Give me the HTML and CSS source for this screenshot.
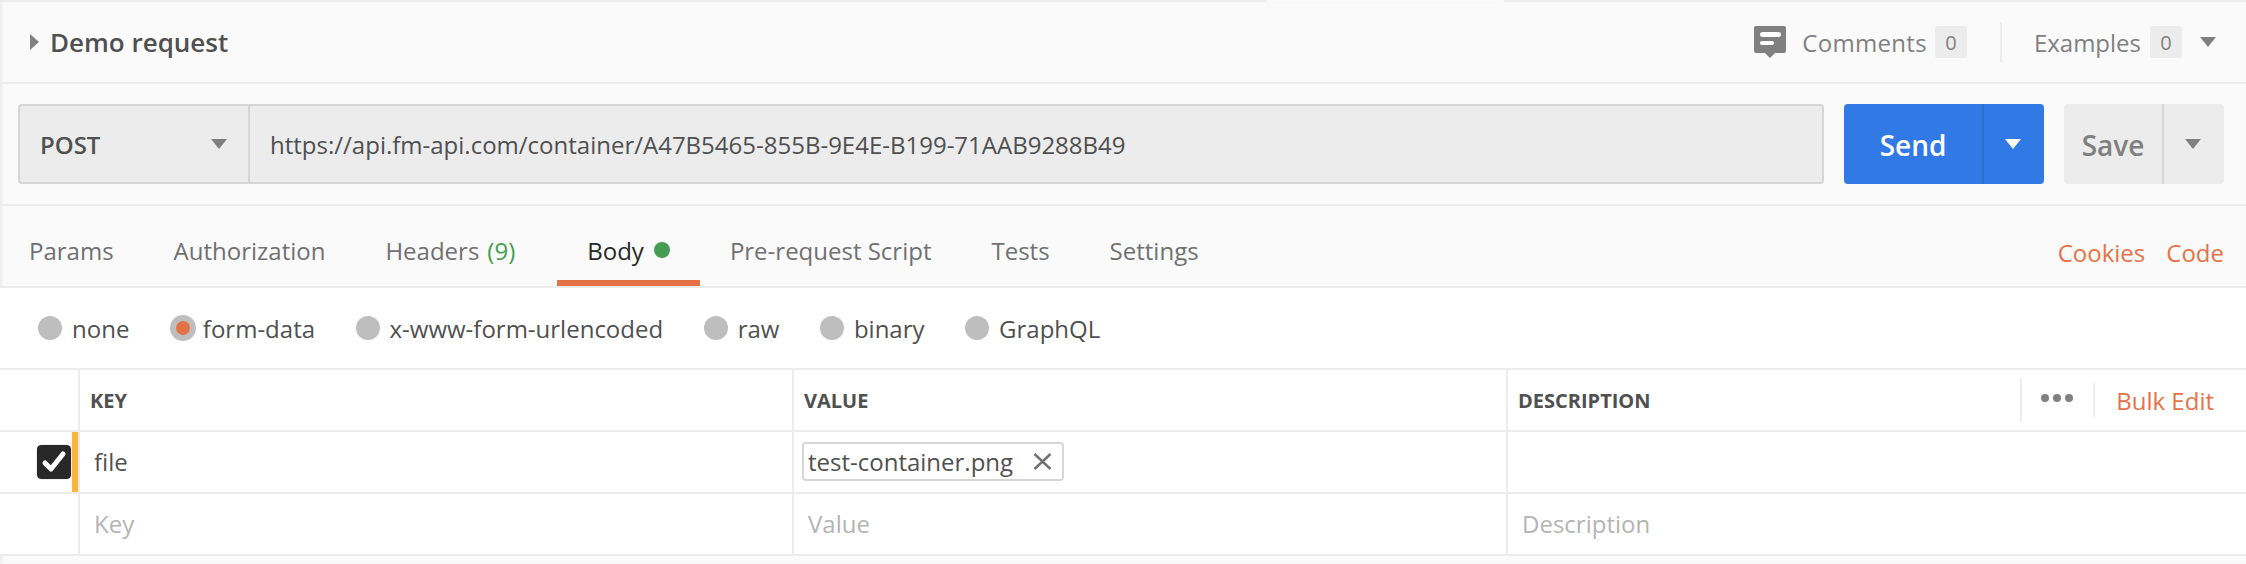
FILE: index.html
```html
<!DOCTYPE html>
<html lang="en">
<head>
<meta charset="utf-8">
<title>Demo request</title>
<link rel="stylesheet" href="styles.css">
</head>
<body>
<div class="app">
  <header class="head">
    <div class="crumb"><span class="caret-right"></span><span class="title">Demo request</span></div>
    <div class="meta">
      <svg class="comment-icon" width="32" height="32" viewBox="0 0 32 32"><path fill="#808080" d="M2 0h28a2 2 0 0 1 2 2v23a2 2 0 0 1-2 2h-9l-5 5-5-5H2a2 2 0 0 1-2-2V2a2 2 0 0 1 2-2z"/><rect x="6" y="6" width="21" height="5" rx="2.5" fill="#fff"/><rect x="6" y="15" width="14" height="4" rx="2" fill="#fff"/></svg>
      <span class="meta-label comments">Comments</span><span class="count">0</span>
      <span class="meta-sep"></span>
      <span class="meta-label">Examples</span><span class="count count-examples">0</span>
      <span class="tri tri-grey meta-tri"></span>
    </div>
  </header>
  <section class="urlbar">
    <div class="url-group">
      <div class="method"><span>POST</span><span class="tri tri-grey"></span></div>
      <div class="url">https://api.fm-api.com/container/A47B5465-855B-9E4E-B199-71AAB9288B49</div>
    </div>
    <div class="send"><span class="send-main">Send</span><span class="send-more"><span class="tri tri-white"></span></span></div>
    <div class="save"><span class="save-main">Save</span><span class="save-more"><span class="tri tri-grey"></span></span></div>
  </section>
  <nav class="tabs">
    <div class="tab-list">
      <span class="tab">Params</span>
      <span class="tab">Authorization</span>
      <span class="tab tab-headers">Headers <em class="green">(9)</em></span>
      <span class="tab active">Body <i class="dot"></i></span>
      <span class="tab">Pre-request Script</span>
      <span class="tab">Tests</span>
      <span class="tab">Settings</span>
    </div>
    <div class="tab-links"><span>Cookies</span><span>Code</span></div>
  </nav>
  <div class="modes">
    <label class="mode"><i class="radio"></i>none</label>
    <label class="mode"><i class="radio on"></i>form-data</label>
    <label class="mode"><i class="radio"></i>x-www-form-urlencoded</label>
    <label class="mode"><i class="radio"></i>raw</label>
    <label class="mode"><i class="radio"></i>binary</label>
    <label class="mode"><i class="radio"></i>GraphQL</label>
  </div>
  <div class="table">
    <div class="row row-head">
      <div class="cell-check"></div>
      <div class="cell cell-k">KEY</div>
      <div class="cell cell-v">VALUE</div>
      <div class="cell cell-d">DESCRIPTION
        <div class="tools">
          <span class="tool-sep tall"></span>
          <span class="dots"><i></i><i></i><i></i></span>
          <span class="tool-sep"></span>
          <span class="bulk">Bulk Edit</span>
        </div>
      </div>
    </div>
    <div class="row row-file">
      <div class="cell-check marked"><svg class="check" width="34" height="34" viewBox="0 0 34 34"><rect width="34" height="34" rx="4" fill="#282828"/><path d="M8 18l6 6L26 9" fill="none" stroke="#fff" stroke-width="5" stroke-linecap="round" stroke-linejoin="round"/></svg></div>
      <div class="cell cell-k text">file</div>
      <div class="cell cell-v text"><span class="chip">test-container.png<svg class="x" width="19" height="17" viewBox="0 0 19 17"><path d="M1.5 1l16 15M17.5 1l-16 15" stroke="#707070" stroke-width="2.4" fill="none"/></svg></span></div>
      <div class="cell cell-d"></div>
    </div>
    <div class="row row-empty">
      <div class="cell-check"></div>
      <div class="cell cell-k ph">Key</div>
      <div class="cell cell-v ph">Value</div>
      <div class="cell cell-d ph">Description</div>
    </div>
  </div>
</div>
</body>
</html>
```
FILE: styles.css
```css
* { box-sizing: border-box; }
html, body { margin: 0; padding: 0; }
body { width: 2246px; height: 564px; overflow: hidden; background: #fafafa; font-family: "Open Sans", sans-serif; color: #505050; font-size: 24px; }
.app { height: 564px; border-top: 2px solid #ececec; box-shadow: inset 3px 0 3px -1px #ececec; }
.head { position: relative; height: 82px; border-bottom: 2px solid #ececec; display: flex; align-items: center; justify-content: space-between; padding: 0 30px; }
.head::before { content: ""; position: absolute; top: -2px; left: 1265px; width: 240px; height: 2px; background: #fafafa; clip-path: polygon(0 100%, 2px 0, 238px 0, 100% 100%); }
.crumb { display: flex; align-items: center; gap: 11px; }
.caret-right { width: 0; height: 0; border-style: solid; border-width: 8px 0 8px 9px; border-color: transparent transparent transparent #808080; }
.title { font-size: 26px; font-weight: 600; }
.meta { display: flex; align-items: center; }
.comment-icon { margin-right: 16px; }
.meta-label { color: #808080; }
.comments { letter-spacing: .3px; }
.count { width: 32px; height: 32px; margin-left: 8px; background: #ececec; border-radius: 3px; font-size: 20px; color: #808080; display: flex; align-items: center; justify-content: center; }
.count-examples { margin-left: 9px; }
.meta-sep { width: 2px; height: 40px; background: #ececec; margin: 0 32px 0 33px; }
.tri { display: inline-block; width: 0; height: 0; border-style: solid; border-width: 10px 8px 0 8px; border-color: transparent; }
.tri-grey { border-top-color: #808080; }
.tri-white { border-top-color: #fff; }
.meta-tri { margin-left: 18px; }
.urlbar { display: flex; padding: 20px 22px 20px 18px; height: 122px; border-bottom: 2px solid #ececec; }
.url-group { width: 1806px; height: 80px; display: flex; background: #ececec; border: 2px solid #d6d6d6; border-radius: 4px; }
.method { width: 230px; flex: none; display: flex; align-items: center; justify-content: space-between; padding: 0 21px 0 20px; border-right: 2px solid #d6d6d6; font-weight: 600; }
.url { padding-left: 20px; display: flex; align-items: center; }
.send { margin-left: 20px; width: 200px; height: 80px; display: flex; background: #3179e4; border-radius: 4px; color: #fff; font-size: 28px; font-weight: 600; }
.send-main { width: 138px; padding-top: 2px; display: flex; align-items: center; justify-content: center; }
.send-more { flex: 1; border-left: 2px solid #2c6dcd; padding-right: 3px; display: flex; align-items: center; justify-content: center; }
.save { margin-left: 20px; width: 160px; height: 80px; display: flex; background: #ececec; border-radius: 4px; color: #808080; font-size: 28px; font-weight: 600; }
.save-main { width: 98px; padding-top: 2px; display: flex; align-items: center; justify-content: center; }
.save-more { flex: 1; border-left: 2px solid #d6d6d6; padding-right: 3px; display: flex; align-items: center; justify-content: center; }
.tabs { height: 82px; border-bottom: 2px solid #ececec; display: flex; justify-content: space-between; padding: 0 22px 0 0; }
.tab-list { display: flex; }
.tab { padding: 8px 30px 0; height: 80px; display: flex; align-items: center; gap: 8px; color: #707070; }
.tab:first-child { padding-left: 29px; }
.tab-headers { margin-right: 12px; }
.tab.active { color: #282828; border-bottom: 6px solid #e57247; padding-top: 14px; gap: 10px; }
.green { color: #459c52; font-style: normal; }
.dot { width: 16px; height: 16px; border-radius: 50%; background: #459c52; }
.tab-links { display: flex; align-items: center; padding-top: 12px; gap: 21px; color: #e57247; }
.modes { height: 82px; background: #fff; border-bottom: 2px solid #ececec; display: flex; align-items: center; gap: 40.5px; padding-left: 38px; }
.mode { display: flex; align-items: center; gap: 10px; }
.radio { width: 24px; height: 24px; border-radius: 50%; background: #bebebe; display: flex; align-items: center; justify-content: center; }
.radio.on { width: 26px; height: 26px; margin-right: -3px; }
.radio.on::after { content: ""; width: 14px; height: 14px; border-radius: 50%; background: #e57247; }
.table { background: #fff; border-bottom: 2px solid #ececec; }
.row { display: flex; border-bottom: 2px solid #ececec; }
.row:last-child { border-bottom: 0; }
.row-head, .row-file { height: 62px; }
.row-empty { height: 60px; }
.cell-check { width: 80px; flex: none; border-right: 2px solid #ececec; display: flex; align-items: center; justify-content: flex-end; }
.cell { border-right: 2px solid #ececec; display: flex; align-items: center; padding-left: 14px; padding-bottom: 2px; }
.cell-k { width: 714px; }
.cell-v { width: 714px; }
.cell-d { flex: 1; border-right: 0; justify-content: space-between; }
.row-head .cell { font-size: 20px; font-weight: 700; padding-left: 10px; padding-bottom: 0; }
.ph { color: #b4b4b4; }
.marked { padding-right: 7px; box-shadow: inset -6px 0 0 #f8b63c; }
.check { border-radius: 4px; box-shadow: 0 0 0 1px #eee; }
.chip { display: flex; align-items: center; height: 39px; border: 2px solid #d6d6d6; border-radius: 4px; padding: 0 10px 0 4px; margin-left: -6px; }
.x { margin-left: 20px; }
.tools { display: flex; align-items: center; height: 44px; font-weight: 400; padding-right: 32px; }
.tool-sep { width: 2px; height: 34px; background: #ececec; }
.tool-sep.tall { height: 44px; }
.dots { display: flex; gap: 4px; padding: 0 20px 4px 19px; }
.dots i { width: 8px; height: 8px; border-radius: 50%; background: #808080; }
.bulk { margin-left: 21px; font-size: 24px; color: #e57247; }
```
